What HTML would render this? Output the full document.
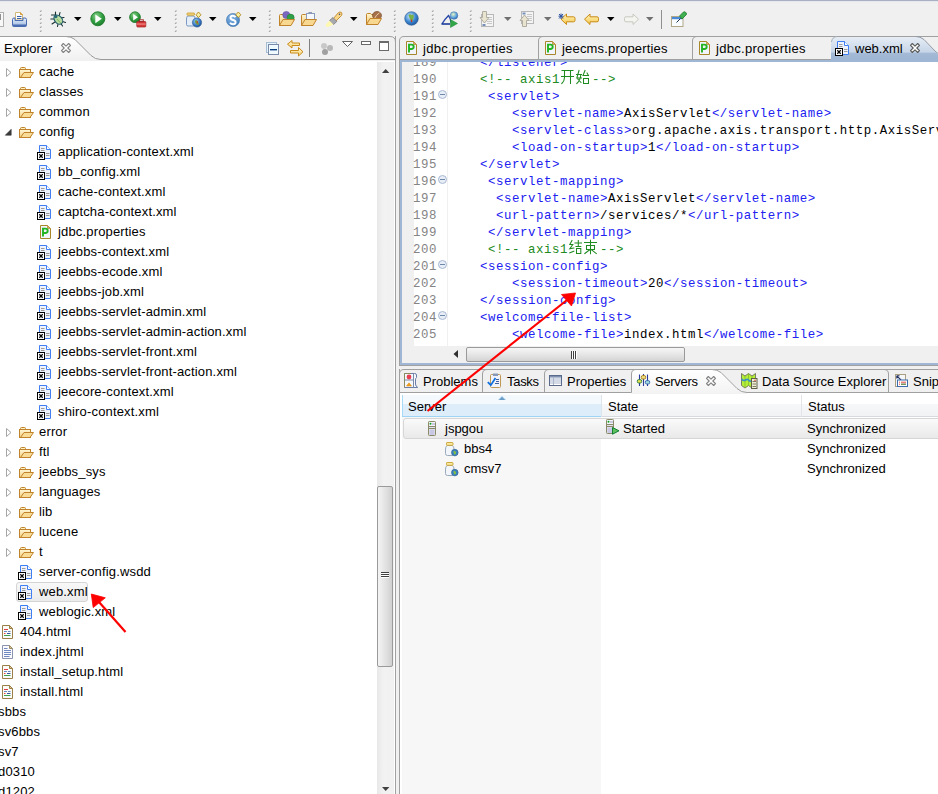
<!DOCTYPE html>
<html><head><meta charset="utf-8">
<style>
*{margin:0;padding:0;box-sizing:border-box}
html,body{width:938px;height:794px;overflow:hidden;background:#f0f0f0;font-family:"Liberation Sans",sans-serif;font-size:13px;color:#000}
.a{position:absolute}
svg{position:absolute;overflow:visible}
.t{position:absolute;white-space:pre;line-height:16px}
.code{position:absolute;font-family:"Liberation Mono",monospace;font-size:12.4px;letter-spacing:0.56px;line-height:17px;white-space:pre}
.tg{color:#2020f0}
.cm{color:#208a20}
.tx{color:#000}
.ln{color:#848484}
</style></head><body>
<!-- top window edge -->
<div class="a" style="left:0;top:0;width:938px;height:1px;background:#aab0c4"></div>
<div class="a" style="left:0;top:1px;width:938px;height:1px;background:#e6e7ec"></div>

<!-- TOOLBAR -->
<div class="a" style="left:0;top:2px;width:938px;height:34px;background:#f0f0f0"></div>
<svg style="left:0;top:12px" width="4" height="15"><rect x="-6" y="0.5" width="9.5" height="14" fill="#f8f8f8" stroke="#b0b0b0"/><rect x="0" y="2" width="1" height="6" fill="#909090"/></svg>
<svg style="left:12px;top:11px" width="16" height="17">
<defs><linearGradient id="prn" x1="0" y1="0" x2="0" y2="1"><stop offset="0" stop-color="#e8f0fa"/><stop offset="1" stop-color="#9ab4dc"/></linearGradient></defs>
<path d="M3.5 1.5H8.5L10.5 3.5V9H3.5Z" fill="#fcfcfc" stroke="#d0b878"/>
<path d="M8.5 1.5V3.5H10.5" fill="#e8a840" stroke="#d09020" stroke-width="0.8"/>
<rect x="5" y="5" width="4.5" height="1" fill="#3a60a8"/><rect x="5" y="7" width="4.5" height="1" fill="#3a60a8"/>
<path d="M0.5 8.5Q0.5 7 2 7H3V9.5H11V7H13Q14.5 7 14.5 8.5V14.5Q14.5 15.5 13.5 15.5H1.5Q0.5 15.5 0.5 14.5Z" fill="url(#prn)" stroke="#4a6cb0"/>
<rect x="1" y="13.5" width="13" height="1.6" fill="#4a6cb0"/>
</svg>
<svg style="left:39px;top:9px" width="4" height="23"><path d="M1 3L2.5 1.5" stroke="#a8a8a8" stroke-width="1.1"/><rect x="1.5" y="3" width="1" height="1" fill="#fff"/><path d="M1 7L2.5 5.5" stroke="#a8a8a8" stroke-width="1.1"/><rect x="1.5" y="7" width="1" height="1" fill="#fff"/><path d="M1 11L2.5 9.5" stroke="#a8a8a8" stroke-width="1.1"/><rect x="1.5" y="11" width="1" height="1" fill="#fff"/><path d="M1 15L2.5 13.5" stroke="#a8a8a8" stroke-width="1.1"/><rect x="1.5" y="15" width="1" height="1" fill="#fff"/><path d="M1 19L2.5 17.5" stroke="#a8a8a8" stroke-width="1.1"/><rect x="1.5" y="19" width="1" height="1" fill="#fff"/><path d="M1 23L2.5 21.5" stroke="#a8a8a8" stroke-width="1.1"/><rect x="1.5" y="23" width="1" height="1" fill="#fff"/></svg>
<svg style="left:50px;top:11px" width="17" height="17">
<g stroke="#1a3030" stroke-width="1.1" fill="none" stroke-linecap="round">
<path d="M5.5 1V4.5M1.5 4H5M0.8 8H4.2M2 13L5 11M7.5 15.5L8 13"/>
<path d="M10 1.5L9.3 4.5M14 6.5L11.5 6.8M15.5 11.5L12.5 10.5M12.5 15L11 12.5"/>
</g>
<ellipse cx="8.3" cy="8.6" rx="3.6" ry="5.2" transform="rotate(-42 8.3 8.6)" fill="#b8dca0" stroke="#1f5a6a" stroke-width="1.1"/>
<circle cx="5.8" cy="5.6" r="1.7" fill="#2a6a78"/>
<path d="M6.8 8L10.5 11.8" stroke="#78b060" stroke-width="1"/>
</svg>
<svg style="left:74px;top:17px" width="8" height="5"><path d="M0 0H7.5L3.75 4Z" fill="#000"/></svg>
<svg style="left:90px;top:11px" width="16" height="16">
<defs><radialGradient id="gr1" cx="0.4" cy="0.3" r="0.75"><stop offset="0" stop-color="#8ad08a"/><stop offset="0.55" stop-color="#33a043"/><stop offset="1" stop-color="#18782a"/></radialGradient></defs>
<circle cx="7.8" cy="7.8" r="7" fill="url(#gr1)" stroke="#1f7a2a" stroke-width="0.9"/>
<path d="M5.3 3.6L11.8 7.8L5.3 12.2Z" fill="#fff"/>
</svg>
<svg style="left:114px;top:17px" width="8" height="5"><path d="M0 0H7.5L3.75 4Z" fill="#000"/></svg>
<svg style="left:129px;top:11px" width="18" height="17">
<circle cx="6" cy="6.2" r="5.4" fill="url(#gr1)" stroke="#1f7a2a" stroke-width="0.8"/>
<path d="M4.2 3L9 6.2L4.2 9.4Z" fill="#fff"/>
<rect x="7.8" y="10.5" width="9" height="5.5" rx="0.8" fill="#d83a3a" stroke="#a02020" stroke-width="0.7"/>
<rect x="10.3" y="8.8" width="4" height="2" fill="none" stroke="#a02020" stroke-width="0.9"/>
<rect x="8" y="12.6" width="8.6" height="0.9" fill="#f8a0a0"/>
</svg>
<svg style="left:154px;top:17px" width="8" height="5"><path d="M0 0H7.5L3.75 4Z" fill="#000"/></svg>
<svg style="left:174px;top:9px" width="4" height="23"><path d="M1 3L2.5 1.5" stroke="#a8a8a8" stroke-width="1.1"/><rect x="1.5" y="3" width="1" height="1" fill="#fff"/><path d="M1 7L2.5 5.5" stroke="#a8a8a8" stroke-width="1.1"/><rect x="1.5" y="7" width="1" height="1" fill="#fff"/><path d="M1 11L2.5 9.5" stroke="#a8a8a8" stroke-width="1.1"/><rect x="1.5" y="11" width="1" height="1" fill="#fff"/><path d="M1 15L2.5 13.5" stroke="#a8a8a8" stroke-width="1.1"/><rect x="1.5" y="15" width="1" height="1" fill="#fff"/><path d="M1 19L2.5 17.5" stroke="#a8a8a8" stroke-width="1.1"/><rect x="1.5" y="19" width="1" height="1" fill="#fff"/><path d="M1 23L2.5 21.5" stroke="#a8a8a8" stroke-width="1.1"/><rect x="1.5" y="23" width="1" height="1" fill="#fff"/></svg>
<svg style="left:186px;top:11px" width="17" height="17">
<path d="M1.5 5Q0.5 6 0.5 8V13.5Q0.5 15 2 15H7.5Q9 15 9 13.5V8Q9 6 8 5Z" fill="#e4eef8" stroke="#7a98c0"/>
<rect x="1" y="2" width="7.5" height="2.2" rx="0.6" fill="#f4d880" stroke="#c89a28" stroke-width="0.8"/>
<defs><radialGradient id="glb" cx="0.4" cy="0.35" r="0.7"><stop offset="0" stop-color="#a0d0f8"/><stop offset="0.6" stop-color="#3a7ac8"/><stop offset="1" stop-color="#1a4a90"/></radialGradient></defs>
<circle cx="11" cy="11.5" r="4.6" fill="url(#glb)" stroke="#2a5a90" stroke-width="0.6"/>
<path d="M9 9.5Q10.5 8.5 11.5 10T13 13.5L11 14Q10 12 9 11.5Z" fill="#70a840"/>
<path d="M11.2 10V12.5" stroke="#d03020" stroke-width="1"/>
<path d="M12.5 1L15 3.8L12.5 6.6L10 3.8Z" fill="#f8f0a0" stroke="#b08820" stroke-width="0.9"/>
</svg>
<svg style="left:209px;top:17px" width="8" height="5"><path d="M0 0H7.5L3.75 4Z" fill="#000"/></svg>
<svg style="left:226px;top:11px" width="17" height="17">
<defs><radialGradient id="gb1" cx="0.4" cy="0.35" r="0.75"><stop offset="0" stop-color="#88b8e8"/><stop offset="1" stop-color="#3a78b8"/></radialGradient></defs>
<circle cx="7" cy="9" r="6.6" fill="url(#gb1)" stroke="#4a7ab0" stroke-width="0.6"/>
<path d="M9.6 6.2Q8.5 4.8 6.8 4.8Q4.5 4.8 4.5 6.8Q4.5 8.4 7 9Q9.6 9.6 9.6 11.2Q9.6 13.3 7 13.3Q5 13.3 4 11.8" fill="none" stroke="#fff" stroke-width="1.9"/>
<path d="M12.3 1L14.8 3.8L12.3 6.6L9.8 3.8Z" fill="#f8f0a0" stroke="#b08820" stroke-width="0.9"/>
</svg>
<svg style="left:249px;top:17px" width="8" height="5"><path d="M0 0H7.5L3.75 4Z" fill="#000"/></svg>
<svg style="left:268px;top:9px" width="4" height="23"><path d="M1 3L2.5 1.5" stroke="#a8a8a8" stroke-width="1.1"/><rect x="1.5" y="3" width="1" height="1" fill="#fff"/><path d="M1 7L2.5 5.5" stroke="#a8a8a8" stroke-width="1.1"/><rect x="1.5" y="7" width="1" height="1" fill="#fff"/><path d="M1 11L2.5 9.5" stroke="#a8a8a8" stroke-width="1.1"/><rect x="1.5" y="11" width="1" height="1" fill="#fff"/><path d="M1 15L2.5 13.5" stroke="#a8a8a8" stroke-width="1.1"/><rect x="1.5" y="15" width="1" height="1" fill="#fff"/><path d="M1 19L2.5 17.5" stroke="#a8a8a8" stroke-width="1.1"/><rect x="1.5" y="19" width="1" height="1" fill="#fff"/><path d="M1 23L2.5 21.5" stroke="#a8a8a8" stroke-width="1.1"/><rect x="1.5" y="23" width="1" height="1" fill="#fff"/></svg>
<svg style="left:279px;top:11px" width="17" height="16">
<defs><linearGradient id="tf279" x1="0" y1="0" x2="0" y2="1"><stop offset="0" stop-color="#fff6d0"/><stop offset="1" stop-color="#f0c870"/></linearGradient></defs>
<path d="M0.5 14.5V4.5Q0.5 3.5 1.5 3.5H4.5L5.5 4.5H12.5V8" fill="url(#tf279)" stroke="#c0822a"/>
<circle cx="7.3" cy="4" r="3.6" fill="#7a68c0" stroke="#5a4aa0" stroke-width="0.5"/><circle cx="11.6" cy="6.7" r="3.6" fill="#30a048" stroke="#207a30" stroke-width="0.5"/>
<path d="M0.5 14.5L4 8.5H15.5L12 14.5Z" fill="#f8d890" stroke="#c0822a" stroke-linejoin="round"/>
<path d="M0.5 14.5V8" stroke="#c0822a"/>

</svg>
<svg style="left:301px;top:11px" width="17" height="16">
<defs><linearGradient id="tf301" x1="0" y1="0" x2="0" y2="1"><stop offset="0" stop-color="#fff6d0"/><stop offset="1" stop-color="#f0c870"/></linearGradient></defs>
<path d="M0.5 14.5V4.5Q0.5 3.5 1.5 3.5H4.5L5.5 4.5H12.5V8" fill="url(#tf301)" stroke="#c0822a"/>
<rect x="5.5" y="2.5" width="8" height="6" fill="#f4f8fc" stroke="#8a9ab8"/><rect x="7.5" y="1" width="3.5" height="2" fill="#8a9ab8"/>
<path d="M0.5 14.5L4 8.5H15.5L12 14.5Z" fill="#f8d890" stroke="#c0822a" stroke-linejoin="round"/>
<path d="M0.5 14.5V8" stroke="#c0822a"/>

</svg>
<svg style="left:325px;top:11px" width="18" height="17">
<path d="M8 8L13.5 1.5Q15 0.5 16.5 1.5Q17.5 3 16.5 4.5L10.5 10.5Z" fill="#f8d888" stroke="#c08828" stroke-width="0.9"/>
<path d="M4.5 9.5L8 6.5L11.8 10.5L8.5 13.5Z" fill="#a8a8b0" stroke="#787880" stroke-width="0.8"/>
<path d="M0.5 14Q1 16.5 3 16L8.5 13.5L4.5 9.5Z" fill="#fff8b0"/>
<circle cx="14.5" cy="3.2" r="0.8" fill="#304070"/>
</svg>
<svg style="left:350px;top:17px" width="8" height="5"><path d="M0 0H7.5L3.75 4Z" fill="#000"/></svg>
<svg style="left:366px;top:10px" width="17" height="16">
<defs><linearGradient id="tf366" x1="0" y1="0" x2="0" y2="1"><stop offset="0" stop-color="#fff6d0"/><stop offset="1" stop-color="#f0c870"/></linearGradient></defs>
<path d="M0.5 14.5V4.5Q0.5 3.5 1.5 3.5H4.5L5.5 4.5H12.5V8" fill="url(#tf366)" stroke="#c0822a"/>
<ellipse cx="11" cy="5.5" rx="4.5" ry="4" fill="#a87048" stroke="#6a4020" stroke-width="0.6"/><path d="M8.5 8.5Q10 5 13.5 2.8" stroke="#f0d8b0" stroke-width="0.9" fill="none"/>
<path d="M0.5 14.5L4 8.5H15.5L12 14.5Z" fill="#f8d890" stroke="#c0822a" stroke-linejoin="round"/>
<path d="M0.5 14.5V8" stroke="#c0822a"/>

</svg>
<svg style="left:393px;top:9px" width="4" height="23"><path d="M1 3L2.5 1.5" stroke="#a8a8a8" stroke-width="1.1"/><rect x="1.5" y="3" width="1" height="1" fill="#fff"/><path d="M1 7L2.5 5.5" stroke="#a8a8a8" stroke-width="1.1"/><rect x="1.5" y="7" width="1" height="1" fill="#fff"/><path d="M1 11L2.5 9.5" stroke="#a8a8a8" stroke-width="1.1"/><rect x="1.5" y="11" width="1" height="1" fill="#fff"/><path d="M1 15L2.5 13.5" stroke="#a8a8a8" stroke-width="1.1"/><rect x="1.5" y="15" width="1" height="1" fill="#fff"/><path d="M1 19L2.5 17.5" stroke="#a8a8a8" stroke-width="1.1"/><rect x="1.5" y="19" width="1" height="1" fill="#fff"/><path d="M1 23L2.5 21.5" stroke="#a8a8a8" stroke-width="1.1"/><rect x="1.5" y="23" width="1" height="1" fill="#fff"/></svg>
<svg style="left:404px;top:11px" width="16" height="16">
<defs><radialGradient id="gg1" cx="0.4" cy="0.35" r="0.75"><stop offset="0" stop-color="#d0ecff"/><stop offset="0.55" stop-color="#3a84d0"/><stop offset="1" stop-color="#1a4a90"/></radialGradient></defs>
<circle cx="7.5" cy="7.5" r="6.8" fill="url(#gg1)" stroke="#2a5a90" stroke-width="0.6"/>
<path d="M4.5 4Q6 2.5 7.5 4L9.5 3.5Q10.5 6 9 8.5L8 11Q6.5 9 5.5 7Z" fill="#78b048"/>
<path d="M7.2 8.5L7.8 11" stroke="#d03020" stroke-width="1.2"/>
</svg>
<svg style="left:431px;top:9px" width="4" height="23"><path d="M1 3L2.5 1.5" stroke="#a8a8a8" stroke-width="1.1"/><rect x="1.5" y="3" width="1" height="1" fill="#fff"/><path d="M1 7L2.5 5.5" stroke="#a8a8a8" stroke-width="1.1"/><rect x="1.5" y="7" width="1" height="1" fill="#fff"/><path d="M1 11L2.5 9.5" stroke="#a8a8a8" stroke-width="1.1"/><rect x="1.5" y="11" width="1" height="1" fill="#fff"/><path d="M1 15L2.5 13.5" stroke="#a8a8a8" stroke-width="1.1"/><rect x="1.5" y="15" width="1" height="1" fill="#fff"/><path d="M1 19L2.5 17.5" stroke="#a8a8a8" stroke-width="1.1"/><rect x="1.5" y="19" width="1" height="1" fill="#fff"/><path d="M1 23L2.5 21.5" stroke="#a8a8a8" stroke-width="1.1"/><rect x="1.5" y="23" width="1" height="1" fill="#fff"/></svg>
<svg style="left:441px;top:11px" width="18" height="17">
<defs><radialGradient id="gp1" cx="0.4" cy="0.35" r="0.75"><stop offset="0" stop-color="#e8f4c0"/><stop offset="0.6" stop-color="#58a0e0"/><stop offset="1" stop-color="#2a60a8"/></radialGradient></defs>
<circle cx="13" cy="4.5" r="3.8" fill="url(#gp1)" stroke="#3a6aa0" stroke-width="0.5"/>
<path d="M1 12.8Q4 8 7.5 4.5Q9.5 7 10 11.5" fill="none" stroke="#2a48a8" stroke-width="1.3"/>
<path d="M0.5 13H9" stroke="#1a3a98" stroke-width="1.6"/>
<path d="M9.5 8.5L16.5 12.5L9.5 16.5Z" fill="#30a848" stroke="#1a8030" stroke-width="0.5"/>
</svg>
<svg style="left:469px;top:9px" width="4" height="23"><path d="M1 3L2.5 1.5" stroke="#a8a8a8" stroke-width="1.1"/><rect x="1.5" y="3" width="1" height="1" fill="#fff"/><path d="M1 7L2.5 5.5" stroke="#a8a8a8" stroke-width="1.1"/><rect x="1.5" y="7" width="1" height="1" fill="#fff"/><path d="M1 11L2.5 9.5" stroke="#a8a8a8" stroke-width="1.1"/><rect x="1.5" y="11" width="1" height="1" fill="#fff"/><path d="M1 15L2.5 13.5" stroke="#a8a8a8" stroke-width="1.1"/><rect x="1.5" y="15" width="1" height="1" fill="#fff"/><path d="M1 19L2.5 17.5" stroke="#a8a8a8" stroke-width="1.1"/><rect x="1.5" y="19" width="1" height="1" fill="#fff"/><path d="M1 23L2.5 21.5" stroke="#a8a8a8" stroke-width="1.1"/><rect x="1.5" y="23" width="1" height="1" fill="#fff"/></svg>
<svg style="left:480px;top:11px" width="16" height="17">
<rect x="1.5" y="3.5" width="12" height="12" fill="#f4f4f4" stroke="#b8b8b8"/>
<path d="M7 6.5H12M7 8.5H12M7 10.5H12M7 12.5H12" stroke="#c8c8c8"/>
<rect x="2.5" y="13" width="3" height="2" fill="#7890b8"/>
<path d="M2.5 0.5H6.5V6.5H9L4.5 12L0 6.5H2.5Z" fill="#e8e4d0" stroke="#b0aca0"/>
</svg>
<svg style="left:504px;top:17px" width="8" height="5"><path d="M0 0H7.5L3.75 4Z" fill="#707070"/></svg>
<svg style="left:520px;top:11px" width="16" height="17">
<rect x="1.5" y="0.5" width="12" height="12" fill="#f4f4f4" stroke="#b8b8b8"/>
<path d="M7 3.5H12M7 5.5H12M7 7.5H12M7 9.5H12" stroke="#c8c8c8"/>
<rect x="2.5" y="1.5" width="3" height="2" fill="#7890b8"/>
<path d="M2.5 15.5H6.5V9.5H9L4.5 4L0 9.5H2.5Z" fill="#e8e4d0" stroke="#b0aca0"/>
</svg>
<svg style="left:544px;top:17px" width="8" height="5"><path d="M0 0H7.5L3.75 4Z" fill="#707070"/></svg>
<svg style="left:558px;top:13px" width="18" height="13"><defs><linearGradient id="yarr" x1="0" y1="0" x2="0" y2="1"><stop offset="0" stop-color="#fff4c0"/><stop offset="1" stop-color="#f8c848"/></linearGradient></defs><path d="M0.5 6.2L6 1V3.8H13Q14.5 3.8 14.5 5.3V7.3Q14.5 8.8 13 8.8H6V11.5Z" transform="translate(2.5 0)" fill="url(#yarr)" stroke="#c88a18" stroke-linejoin="round"/><path d="M3 0.5V6M0.5 3.2H5.5M1 1L5 5.5M5 1L1 5.5" stroke="#2a50a0" stroke-width="1"/></svg>
<svg style="left:584px;top:13px" width="16" height="13"><path d="M0.5 6.2L6 1V3.8H13Q14.5 3.8 14.5 5.3V7.3Q14.5 8.8 13 8.8H6V11.5Z" transform="translate(0 0)" fill="url(#yarr)" stroke="#c88a18" stroke-linejoin="round"/></svg>
<svg style="left:607px;top:17px" width="8" height="5"><path d="M0 0H7.5L3.75 4Z" fill="#000"/></svg>
<svg style="left:624px;top:13px" width="16" height="13"><path d="M0.5 6.2L6 1V3.8H13Q14.5 3.8 14.5 5.3V7.3Q14.5 8.8 13 8.8H6V11.5Z" transform="translate(0 0) translate(15 0) scale(-1 1)" fill="#f4f4f0" stroke="#c8c8c0" stroke-linejoin="round"/></svg>
<svg style="left:646px;top:17px" width="8" height="5"><path d="M0 0H7.5L3.75 4Z" fill="#707070"/></svg>
<div class="a" style="left:661px;top:10px;width:1px;height:19px;background:#909090"></div>
<svg style="left:671px;top:11px" width="16" height="17">
<rect x="0.5" y="5.5" width="11.5" height="10" fill="#f8fbff" stroke="#b0a888"/>
<rect x="1" y="6" width="10.5" height="2.2" fill="#4a88d8"/>
<path d="M5.5 11.5L9.5 7.5" stroke="#203050" stroke-width="1"/>
<path d="M8.5 5L12.5 1Q13.5 0.3 14.5 1.2L15.2 2Q16 3 15 4L11 8Z" fill="#40b050" stroke="#1a7a2a" stroke-width="0.8"/>
</svg>
<!-- LEFT PANEL -->
<div class="a" style="left:0;top:61px;width:395px;height:733px;background:#fff"></div>
<div class="a" style="left:0;top:36px;width:396px;height:25px;background:#f0f0f0"></div>
<svg style="left:0;top:36px" width="397" height="26">
<defs><linearGradient id="tabw" x1="0" y1="0" x2="0" y2="1"><stop offset="0" stop-color="#ffffff"/><stop offset="1" stop-color="#f0f0f0"/></linearGradient></defs>
<path d="M-1 0.5H66Q71 0.5 75 3.5L91 19.5Q95 23.5 101 23.5V25H-1Z" fill="url(#tabw)"/>
<path d="M66 0.5Q71 0.5 75 3.5L91 19.5Q95 23.5 101 23.5H395.5" fill="none" stroke="#9a9a9a"/>
<path d="M-1 0.5H390Q395.5 0.5 395.5 6V26" fill="none" stroke="#a0a0a0"/>
</svg>
<div class="t" style="left:4px;top:41px;">Explorer</div>
<svg style="left:61px;top:43px" width="11" height="11">
<path d="M0.5 2.3L2.3 0.5L5 3.2L7.7 0.5L9.5 2.3L6.8 5L9.5 7.7L7.7 9.5L5 6.8L2.3 9.5L0.5 7.7L3.2 5Z" fill="#fff" stroke="#808080" stroke-width="1.1" stroke-linejoin="round"/>
</svg>
<svg style="left:266px;top:42px" width="14" height="14">
<rect x="0.5" y="0.5" width="10" height="10" fill="#e4f4fc" stroke="#a8bcd4"/>
<rect x="2.5" y="2.5" width="10" height="10" fill="#eefaff" stroke="#7a8aa8"/>
<rect x="4" y="7" width="7" height="1.4" fill="#0a3a80"/>
</svg>
<svg style="left:287px;top:40px" width="17" height="17">
<defs><linearGradient id="lnk" x1="0" y1="0" x2="0" y2="1"><stop offset="0" stop-color="#fff8d0"/><stop offset="1" stop-color="#f8d070"/></linearGradient></defs>
<path d="M0.5 4.2L5 0.5V3H12.5V5.5H5V8Z" fill="url(#lnk)" stroke="#c88a18" stroke-linejoin="round"/>
<path d="M16 11.8L11.5 7.5V10.5H3.5V13H11.5V16Z" fill="url(#lnk)" stroke="#c88a18" stroke-linejoin="round"/>
</svg>
<div class="a" style="left:309px;top:39px;width:1px;height:18px;background:#808080"></div>
<svg style="left:320px;top:42px" width="14" height="14">
<circle cx="4" cy="4" r="3" fill="#c8c8c8"/><circle cx="10" cy="6" r="3" fill="#b8b8b8"/><circle cx="5" cy="10" r="3" fill="#a0a0a0"/>
</svg>
<svg style="left:342px;top:41px" width="11" height="6"><path d="M0.5 0.5H10.5L5.5 5.5Z" fill="#fff" stroke="#555" stroke-width="0.9"/></svg>
<div class="a" style="left:361px;top:41px;width:10px;height:4px;border:1px solid #6a6a6a;background:#fff"></div>
<div class="a" style="left:379px;top:41px;width:10px;height:10px;border:1px solid #6a6a6a;border-top-width:2px;background:#fff"></div>
<div class="a" style="left:377px;top:62px;width:17px;height:732px;background:linear-gradient(to right,#e8e8e8,#f2f2f2 40%,#f0f0f0)"></div>
<svg style="left:382px;top:69px" width="8" height="5"><path d="M0 4L3.7 0L7.4 4Z" fill="#404040"/></svg>
<svg style="left:382px;top:787px" width="8" height="5"><path d="M0 0L3.7 4L7.4 0Z" fill="#404040"/></svg>
<div class="a" style="left:377px;top:486px;width:16px;height:181px;border:1px solid #9a9a9a;border-radius:2px;background:linear-gradient(to right,#f4f4f4,#e0e0e0 60%,#d0d0d0)"></div>
<svg style="left:381px;top:572px" width="8" height="7"><path d="M0 0.5H8M0 2.5H8M0 4.5H8" stroke="#404040"/><path d="M0 1.5H8M0 3.5H8M0 5.5H8" stroke="#fff"/></svg>
<div class="a" style="left:395px;top:36px;width:1px;height:758px;background:#a0a0a0"></div>
<svg style="left:6px;top:68px" width="6" height="9"><path d="M0.5 0.5L5 4.5L0.5 8.5Z" fill="#fff" stroke="#a6a6a6"/></svg>
<svg style="left:19px;top:67px" width="16" height="12">
<defs><linearGradient id="fg67" x1="0" y1="0" x2="0" y2="1"><stop offset="0" stop-color="#fff8d8"/><stop offset="1" stop-color="#f4cf80"/></linearGradient></defs>
<path d="M1.5 2.5V1.5Q1.5 0.5 2.5 0.5H5.5Q6.5 0.5 6.5 1.5V2.5H11.5V5.5" fill="#fdf0c0" stroke="#c0822a"/>
<rect x="0.5" y="2.5" width="11" height="8" fill="url(#fg67)" stroke="#c0822a"/>
<path d="M1.5 10.5L5 5.5H14.5L11 10.5Z" fill="#f8dc98" stroke="#c0822a"/>
</svg>
<div class="t" style="left:39px;top:64px;letter-spacing:0.16px">cache</div>
<svg style="left:6px;top:88px" width="6" height="9"><path d="M0.5 0.5L5 4.5L0.5 8.5Z" fill="#fff" stroke="#a6a6a6"/></svg>
<svg style="left:19px;top:87px" width="16" height="12">
<defs><linearGradient id="fg87" x1="0" y1="0" x2="0" y2="1"><stop offset="0" stop-color="#fff8d8"/><stop offset="1" stop-color="#f4cf80"/></linearGradient></defs>
<path d="M1.5 2.5V1.5Q1.5 0.5 2.5 0.5H5.5Q6.5 0.5 6.5 1.5V2.5H11.5V5.5" fill="#fdf0c0" stroke="#c0822a"/>
<rect x="0.5" y="2.5" width="11" height="8" fill="url(#fg87)" stroke="#c0822a"/>
<path d="M1.5 10.5L5 5.5H14.5L11 10.5Z" fill="#f8dc98" stroke="#c0822a"/>
</svg>
<div class="t" style="left:39px;top:84px;letter-spacing:0.16px">classes</div>
<svg style="left:6px;top:108px" width="6" height="9"><path d="M0.5 0.5L5 4.5L0.5 8.5Z" fill="#fff" stroke="#a6a6a6"/></svg>
<svg style="left:19px;top:107px" width="16" height="12">
<defs><linearGradient id="fg107" x1="0" y1="0" x2="0" y2="1"><stop offset="0" stop-color="#fff8d8"/><stop offset="1" stop-color="#f4cf80"/></linearGradient></defs>
<path d="M1.5 2.5V1.5Q1.5 0.5 2.5 0.5H5.5Q6.5 0.5 6.5 1.5V2.5H11.5V5.5" fill="#fdf0c0" stroke="#c0822a"/>
<rect x="0.5" y="2.5" width="11" height="8" fill="url(#fg107)" stroke="#c0822a"/>
<path d="M1.5 10.5L5 5.5H14.5L11 10.5Z" fill="#f8dc98" stroke="#c0822a"/>
</svg>
<div class="t" style="left:39px;top:104px;letter-spacing:0.16px">common</div>
<svg style="left:5px;top:129px" width="7" height="7"><path d="M6.2 0.3V6.2H0.3Z" fill="#383838" stroke="#383838" stroke-width="0.6" stroke-linejoin="round"/></svg>
<svg style="left:19px;top:127px" width="16" height="12">
<defs><linearGradient id="fg127" x1="0" y1="0" x2="0" y2="1"><stop offset="0" stop-color="#fff8d8"/><stop offset="1" stop-color="#f4cf80"/></linearGradient></defs>
<path d="M1.5 2.5V1.5Q1.5 0.5 2.5 0.5H5.5Q6.5 0.5 6.5 1.5V2.5H11.5V5.5" fill="#fdf0c0" stroke="#c0822a"/>
<rect x="0.5" y="2.5" width="11" height="8" fill="url(#fg127)" stroke="#c0822a"/>
<path d="M1.5 10.5L5 5.5H14.5L11 10.5Z" fill="#f8dc98" stroke="#c0822a"/>
</svg>
<div class="t" style="left:39px;top:124px;letter-spacing:0.16px">config</div>
<svg style="left:37px;top:145px" width="15" height="16">
<path d="M2.5 0.5H9.5L13.5 4.5V13.5H2.5Z" fill="#eef2fd" stroke="#3f7ff2"/>
<path d="M9.5 0.5V4.5H13.5" fill="#ffffff" stroke="#3f7ff2"/>
<path d="M4 3.5H7.5M4 5.5H7.5M9 8.5H12.5M9 10.5H12.5" stroke="#9a9a9a"/>
<rect x="0.5" y="7.5" width="7" height="7" fill="#fff" stroke="#000"/>
<path d="M2.3 9.3L5.7 12.7M5.7 9.3L2.3 12.7" stroke="#000" stroke-width="1.25" fill="none"/>
</svg>
<div class="t" style="left:58px;top:144px;letter-spacing:0.16px">application-context.xml</div>
<svg style="left:37px;top:165px" width="15" height="16">
<path d="M2.5 0.5H9.5L13.5 4.5V13.5H2.5Z" fill="#eef2fd" stroke="#3f7ff2"/>
<path d="M9.5 0.5V4.5H13.5" fill="#ffffff" stroke="#3f7ff2"/>
<path d="M4 3.5H7.5M4 5.5H7.5M9 8.5H12.5M9 10.5H12.5" stroke="#9a9a9a"/>
<rect x="0.5" y="7.5" width="7" height="7" fill="#fff" stroke="#000"/>
<path d="M2.3 9.3L5.7 12.7M5.7 9.3L2.3 12.7" stroke="#000" stroke-width="1.25" fill="none"/>
</svg>
<div class="t" style="left:58px;top:164px;letter-spacing:0.16px">bb_config.xml</div>
<svg style="left:37px;top:185px" width="15" height="16">
<path d="M2.5 0.5H9.5L13.5 4.5V13.5H2.5Z" fill="#eef2fd" stroke="#3f7ff2"/>
<path d="M9.5 0.5V4.5H13.5" fill="#ffffff" stroke="#3f7ff2"/>
<path d="M4 3.5H7.5M4 5.5H7.5M9 8.5H12.5M9 10.5H12.5" stroke="#9a9a9a"/>
<rect x="0.5" y="7.5" width="7" height="7" fill="#fff" stroke="#000"/>
<path d="M2.3 9.3L5.7 12.7M5.7 9.3L2.3 12.7" stroke="#000" stroke-width="1.25" fill="none"/>
</svg>
<div class="t" style="left:58px;top:184px;letter-spacing:0.16px">cache-context.xml</div>
<svg style="left:37px;top:205px" width="15" height="16">
<path d="M2.5 0.5H9.5L13.5 4.5V13.5H2.5Z" fill="#eef2fd" stroke="#3f7ff2"/>
<path d="M9.5 0.5V4.5H13.5" fill="#ffffff" stroke="#3f7ff2"/>
<path d="M4 3.5H7.5M4 5.5H7.5M9 8.5H12.5M9 10.5H12.5" stroke="#9a9a9a"/>
<rect x="0.5" y="7.5" width="7" height="7" fill="#fff" stroke="#000"/>
<path d="M2.3 9.3L5.7 12.7M5.7 9.3L2.3 12.7" stroke="#000" stroke-width="1.25" fill="none"/>
</svg>
<div class="t" style="left:58px;top:204px;letter-spacing:0.16px">captcha-context.xml</div>
<svg style="left:40px;top:225px" width="12" height="15">
<path d="M0.5 0.5H7.5L10.5 3.5V13.5H0.5Z" fill="#f2f4fb" stroke="#a8862a"/>
<path d="M7.5 0.5V3.5H10.5Z" fill="#d8b060" stroke="#b89040" stroke-width="0.8"/>
<path d="M3 11.5V3.6H5.3Q7.7 3.6 7.7 5.8Q7.7 8 5.3 8H3" fill="none" stroke="#22b422" stroke-width="1.9"/>
</svg>
<div class="t" style="left:58px;top:224px;letter-spacing:0.16px">jdbc.properties</div>
<svg style="left:37px;top:245px" width="15" height="16">
<path d="M2.5 0.5H9.5L13.5 4.5V13.5H2.5Z" fill="#eef2fd" stroke="#3f7ff2"/>
<path d="M9.5 0.5V4.5H13.5" fill="#ffffff" stroke="#3f7ff2"/>
<path d="M4 3.5H7.5M4 5.5H7.5M9 8.5H12.5M9 10.5H12.5" stroke="#9a9a9a"/>
<rect x="0.5" y="7.5" width="7" height="7" fill="#fff" stroke="#000"/>
<path d="M2.3 9.3L5.7 12.7M5.7 9.3L2.3 12.7" stroke="#000" stroke-width="1.25" fill="none"/>
</svg>
<div class="t" style="left:58px;top:244px;letter-spacing:0.16px">jeebbs-context.xml</div>
<svg style="left:37px;top:265px" width="15" height="16">
<path d="M2.5 0.5H9.5L13.5 4.5V13.5H2.5Z" fill="#eef2fd" stroke="#3f7ff2"/>
<path d="M9.5 0.5V4.5H13.5" fill="#ffffff" stroke="#3f7ff2"/>
<path d="M4 3.5H7.5M4 5.5H7.5M9 8.5H12.5M9 10.5H12.5" stroke="#9a9a9a"/>
<rect x="0.5" y="7.5" width="7" height="7" fill="#fff" stroke="#000"/>
<path d="M2.3 9.3L5.7 12.7M5.7 9.3L2.3 12.7" stroke="#000" stroke-width="1.25" fill="none"/>
</svg>
<div class="t" style="left:58px;top:264px;letter-spacing:0.16px">jeebbs-ecode.xml</div>
<svg style="left:37px;top:285px" width="15" height="16">
<path d="M2.5 0.5H9.5L13.5 4.5V13.5H2.5Z" fill="#eef2fd" stroke="#3f7ff2"/>
<path d="M9.5 0.5V4.5H13.5" fill="#ffffff" stroke="#3f7ff2"/>
<path d="M4 3.5H7.5M4 5.5H7.5M9 8.5H12.5M9 10.5H12.5" stroke="#9a9a9a"/>
<rect x="0.5" y="7.5" width="7" height="7" fill="#fff" stroke="#000"/>
<path d="M2.3 9.3L5.7 12.7M5.7 9.3L2.3 12.7" stroke="#000" stroke-width="1.25" fill="none"/>
</svg>
<div class="t" style="left:58px;top:284px;letter-spacing:0.16px">jeebbs-job.xml</div>
<svg style="left:37px;top:305px" width="15" height="16">
<path d="M2.5 0.5H9.5L13.5 4.5V13.5H2.5Z" fill="#eef2fd" stroke="#3f7ff2"/>
<path d="M9.5 0.5V4.5H13.5" fill="#ffffff" stroke="#3f7ff2"/>
<path d="M4 3.5H7.5M4 5.5H7.5M9 8.5H12.5M9 10.5H12.5" stroke="#9a9a9a"/>
<rect x="0.5" y="7.5" width="7" height="7" fill="#fff" stroke="#000"/>
<path d="M2.3 9.3L5.7 12.7M5.7 9.3L2.3 12.7" stroke="#000" stroke-width="1.25" fill="none"/>
</svg>
<div class="t" style="left:58px;top:304px;letter-spacing:0.16px">jeebbs-servlet-admin.xml</div>
<svg style="left:37px;top:325px" width="15" height="16">
<path d="M2.5 0.5H9.5L13.5 4.5V13.5H2.5Z" fill="#eef2fd" stroke="#3f7ff2"/>
<path d="M9.5 0.5V4.5H13.5" fill="#ffffff" stroke="#3f7ff2"/>
<path d="M4 3.5H7.5M4 5.5H7.5M9 8.5H12.5M9 10.5H12.5" stroke="#9a9a9a"/>
<rect x="0.5" y="7.5" width="7" height="7" fill="#fff" stroke="#000"/>
<path d="M2.3 9.3L5.7 12.7M5.7 9.3L2.3 12.7" stroke="#000" stroke-width="1.25" fill="none"/>
</svg>
<div class="t" style="left:58px;top:324px;letter-spacing:0.16px">jeebbs-servlet-admin-action.xml</div>
<svg style="left:37px;top:345px" width="15" height="16">
<path d="M2.5 0.5H9.5L13.5 4.5V13.5H2.5Z" fill="#eef2fd" stroke="#3f7ff2"/>
<path d="M9.5 0.5V4.5H13.5" fill="#ffffff" stroke="#3f7ff2"/>
<path d="M4 3.5H7.5M4 5.5H7.5M9 8.5H12.5M9 10.5H12.5" stroke="#9a9a9a"/>
<rect x="0.5" y="7.5" width="7" height="7" fill="#fff" stroke="#000"/>
<path d="M2.3 9.3L5.7 12.7M5.7 9.3L2.3 12.7" stroke="#000" stroke-width="1.25" fill="none"/>
</svg>
<div class="t" style="left:58px;top:344px;letter-spacing:0.16px">jeebbs-servlet-front.xml</div>
<svg style="left:37px;top:365px" width="15" height="16">
<path d="M2.5 0.5H9.5L13.5 4.5V13.5H2.5Z" fill="#eef2fd" stroke="#3f7ff2"/>
<path d="M9.5 0.5V4.5H13.5" fill="#ffffff" stroke="#3f7ff2"/>
<path d="M4 3.5H7.5M4 5.5H7.5M9 8.5H12.5M9 10.5H12.5" stroke="#9a9a9a"/>
<rect x="0.5" y="7.5" width="7" height="7" fill="#fff" stroke="#000"/>
<path d="M2.3 9.3L5.7 12.7M5.7 9.3L2.3 12.7" stroke="#000" stroke-width="1.25" fill="none"/>
</svg>
<div class="t" style="left:58px;top:364px;letter-spacing:0.16px">jeebbs-servlet-front-action.xml</div>
<svg style="left:37px;top:385px" width="15" height="16">
<path d="M2.5 0.5H9.5L13.5 4.5V13.5H2.5Z" fill="#eef2fd" stroke="#3f7ff2"/>
<path d="M9.5 0.5V4.5H13.5" fill="#ffffff" stroke="#3f7ff2"/>
<path d="M4 3.5H7.5M4 5.5H7.5M9 8.5H12.5M9 10.5H12.5" stroke="#9a9a9a"/>
<rect x="0.5" y="7.5" width="7" height="7" fill="#fff" stroke="#000"/>
<path d="M2.3 9.3L5.7 12.7M5.7 9.3L2.3 12.7" stroke="#000" stroke-width="1.25" fill="none"/>
</svg>
<div class="t" style="left:58px;top:384px;letter-spacing:0.16px">jeecore-context.xml</div>
<svg style="left:37px;top:405px" width="15" height="16">
<path d="M2.5 0.5H9.5L13.5 4.5V13.5H2.5Z" fill="#eef2fd" stroke="#3f7ff2"/>
<path d="M9.5 0.5V4.5H13.5" fill="#ffffff" stroke="#3f7ff2"/>
<path d="M4 3.5H7.5M4 5.5H7.5M9 8.5H12.5M9 10.5H12.5" stroke="#9a9a9a"/>
<rect x="0.5" y="7.5" width="7" height="7" fill="#fff" stroke="#000"/>
<path d="M2.3 9.3L5.7 12.7M5.7 9.3L2.3 12.7" stroke="#000" stroke-width="1.25" fill="none"/>
</svg>
<div class="t" style="left:58px;top:404px;letter-spacing:0.16px">shiro-context.xml</div>
<svg style="left:6px;top:428px" width="6" height="9"><path d="M0.5 0.5L5 4.5L0.5 8.5Z" fill="#fff" stroke="#a6a6a6"/></svg>
<svg style="left:19px;top:427px" width="16" height="12">
<defs><linearGradient id="fg427" x1="0" y1="0" x2="0" y2="1"><stop offset="0" stop-color="#fff8d8"/><stop offset="1" stop-color="#f4cf80"/></linearGradient></defs>
<path d="M1.5 2.5V1.5Q1.5 0.5 2.5 0.5H5.5Q6.5 0.5 6.5 1.5V2.5H11.5V5.5" fill="#fdf0c0" stroke="#c0822a"/>
<rect x="0.5" y="2.5" width="11" height="8" fill="url(#fg427)" stroke="#c0822a"/>
<path d="M1.5 10.5L5 5.5H14.5L11 10.5Z" fill="#f8dc98" stroke="#c0822a"/>
</svg>
<div class="t" style="left:39px;top:424px;letter-spacing:0.16px">error</div>
<svg style="left:6px;top:448px" width="6" height="9"><path d="M0.5 0.5L5 4.5L0.5 8.5Z" fill="#fff" stroke="#a6a6a6"/></svg>
<svg style="left:19px;top:447px" width="16" height="12">
<defs><linearGradient id="fg447" x1="0" y1="0" x2="0" y2="1"><stop offset="0" stop-color="#fff8d8"/><stop offset="1" stop-color="#f4cf80"/></linearGradient></defs>
<path d="M1.5 2.5V1.5Q1.5 0.5 2.5 0.5H5.5Q6.5 0.5 6.5 1.5V2.5H11.5V5.5" fill="#fdf0c0" stroke="#c0822a"/>
<rect x="0.5" y="2.5" width="11" height="8" fill="url(#fg447)" stroke="#c0822a"/>
<path d="M1.5 10.5L5 5.5H14.5L11 10.5Z" fill="#f8dc98" stroke="#c0822a"/>
</svg>
<div class="t" style="left:39px;top:444px;letter-spacing:0.16px">ftl</div>
<svg style="left:6px;top:468px" width="6" height="9"><path d="M0.5 0.5L5 4.5L0.5 8.5Z" fill="#fff" stroke="#a6a6a6"/></svg>
<svg style="left:19px;top:467px" width="16" height="12">
<defs><linearGradient id="fg467" x1="0" y1="0" x2="0" y2="1"><stop offset="0" stop-color="#fff8d8"/><stop offset="1" stop-color="#f4cf80"/></linearGradient></defs>
<path d="M1.5 2.5V1.5Q1.5 0.5 2.5 0.5H5.5Q6.5 0.5 6.5 1.5V2.5H11.5V5.5" fill="#fdf0c0" stroke="#c0822a"/>
<rect x="0.5" y="2.5" width="11" height="8" fill="url(#fg467)" stroke="#c0822a"/>
<path d="M1.5 10.5L5 5.5H14.5L11 10.5Z" fill="#f8dc98" stroke="#c0822a"/>
</svg>
<div class="t" style="left:39px;top:464px;letter-spacing:0.16px">jeebbs_sys</div>
<svg style="left:6px;top:488px" width="6" height="9"><path d="M0.5 0.5L5 4.5L0.5 8.5Z" fill="#fff" stroke="#a6a6a6"/></svg>
<svg style="left:19px;top:487px" width="16" height="12">
<defs><linearGradient id="fg487" x1="0" y1="0" x2="0" y2="1"><stop offset="0" stop-color="#fff8d8"/><stop offset="1" stop-color="#f4cf80"/></linearGradient></defs>
<path d="M1.5 2.5V1.5Q1.5 0.5 2.5 0.5H5.5Q6.5 0.5 6.5 1.5V2.5H11.5V5.5" fill="#fdf0c0" stroke="#c0822a"/>
<rect x="0.5" y="2.5" width="11" height="8" fill="url(#fg487)" stroke="#c0822a"/>
<path d="M1.5 10.5L5 5.5H14.5L11 10.5Z" fill="#f8dc98" stroke="#c0822a"/>
</svg>
<div class="t" style="left:39px;top:484px;letter-spacing:0.16px">languages</div>
<svg style="left:6px;top:508px" width="6" height="9"><path d="M0.5 0.5L5 4.5L0.5 8.5Z" fill="#fff" stroke="#a6a6a6"/></svg>
<svg style="left:19px;top:507px" width="16" height="12">
<defs><linearGradient id="fg507" x1="0" y1="0" x2="0" y2="1"><stop offset="0" stop-color="#fff8d8"/><stop offset="1" stop-color="#f4cf80"/></linearGradient></defs>
<path d="M1.5 2.5V1.5Q1.5 0.5 2.5 0.5H5.5Q6.5 0.5 6.5 1.5V2.5H11.5V5.5" fill="#fdf0c0" stroke="#c0822a"/>
<rect x="0.5" y="2.5" width="11" height="8" fill="url(#fg507)" stroke="#c0822a"/>
<path d="M1.5 10.5L5 5.5H14.5L11 10.5Z" fill="#f8dc98" stroke="#c0822a"/>
</svg>
<div class="t" style="left:39px;top:504px;letter-spacing:0.16px">lib</div>
<svg style="left:6px;top:528px" width="6" height="9"><path d="M0.5 0.5L5 4.5L0.5 8.5Z" fill="#fff" stroke="#a6a6a6"/></svg>
<svg style="left:19px;top:527px" width="16" height="12">
<defs><linearGradient id="fg527" x1="0" y1="0" x2="0" y2="1"><stop offset="0" stop-color="#fff8d8"/><stop offset="1" stop-color="#f4cf80"/></linearGradient></defs>
<path d="M1.5 2.5V1.5Q1.5 0.5 2.5 0.5H5.5Q6.5 0.5 6.5 1.5V2.5H11.5V5.5" fill="#fdf0c0" stroke="#c0822a"/>
<rect x="0.5" y="2.5" width="11" height="8" fill="url(#fg527)" stroke="#c0822a"/>
<path d="M1.5 10.5L5 5.5H14.5L11 10.5Z" fill="#f8dc98" stroke="#c0822a"/>
</svg>
<div class="t" style="left:39px;top:524px;letter-spacing:0.16px">lucene</div>
<svg style="left:6px;top:548px" width="6" height="9"><path d="M0.5 0.5L5 4.5L0.5 8.5Z" fill="#fff" stroke="#a6a6a6"/></svg>
<svg style="left:19px;top:547px" width="16" height="12">
<defs><linearGradient id="fg547" x1="0" y1="0" x2="0" y2="1"><stop offset="0" stop-color="#fff8d8"/><stop offset="1" stop-color="#f4cf80"/></linearGradient></defs>
<path d="M1.5 2.5V1.5Q1.5 0.5 2.5 0.5H5.5Q6.5 0.5 6.5 1.5V2.5H11.5V5.5" fill="#fdf0c0" stroke="#c0822a"/>
<rect x="0.5" y="2.5" width="11" height="8" fill="url(#fg547)" stroke="#c0822a"/>
<path d="M1.5 10.5L5 5.5H14.5L11 10.5Z" fill="#f8dc98" stroke="#c0822a"/>
</svg>
<div class="t" style="left:39px;top:544px;letter-spacing:0.16px">t</div>
<svg style="left:18px;top:565px" width="15" height="16">
<path d="M2.5 0.5H9.5L13.5 4.5V13.5H2.5Z" fill="#eef2fd" stroke="#3f7ff2"/>
<path d="M9.5 0.5V4.5H13.5" fill="#ffffff" stroke="#3f7ff2"/>
<path d="M4 3.5H7.5M4 5.5H7.5M9 8.5H12.5M9 10.5H12.5" stroke="#9a9a9a"/>
<rect x="0.5" y="7.5" width="7" height="7" fill="#fff" stroke="#000"/>
<path d="M2.3 9.3L5.7 12.7M5.7 9.3L2.3 12.7" stroke="#000" stroke-width="1.25" fill="none"/>
</svg>
<div class="t" style="left:39px;top:564px;letter-spacing:0.16px">server-config.wsdd</div>
<div class="a" style="left:16px;top:582px;width:72px;height:20px;border:1px solid #d4d4d4;border-radius:3px;background:linear-gradient(#f8f8f8,#ebebeb)"></div>
<svg style="left:18px;top:585px" width="15" height="16">
<path d="M2.5 0.5H9.5L13.5 4.5V13.5H2.5Z" fill="#eef2fd" stroke="#3f7ff2"/>
<path d="M9.5 0.5V4.5H13.5" fill="#ffffff" stroke="#3f7ff2"/>
<path d="M4 3.5H7.5M4 5.5H7.5M9 8.5H12.5M9 10.5H12.5" stroke="#9a9a9a"/>
<rect x="0.5" y="7.5" width="7" height="7" fill="#fff" stroke="#000"/>
<path d="M2.3 9.3L5.7 12.7M5.7 9.3L2.3 12.7" stroke="#000" stroke-width="1.25" fill="none"/>
</svg>
<div class="t" style="left:39px;top:584px;letter-spacing:0.16px">web.xml</div>
<svg style="left:18px;top:605px" width="15" height="16">
<path d="M2.5 0.5H9.5L13.5 4.5V13.5H2.5Z" fill="#eef2fd" stroke="#3f7ff2"/>
<path d="M9.5 0.5V4.5H13.5" fill="#ffffff" stroke="#3f7ff2"/>
<path d="M4 3.5H7.5M4 5.5H7.5M9 8.5H12.5M9 10.5H12.5" stroke="#9a9a9a"/>
<rect x="0.5" y="7.5" width="7" height="7" fill="#fff" stroke="#000"/>
<path d="M2.3 9.3L5.7 12.7M5.7 9.3L2.3 12.7" stroke="#000" stroke-width="1.25" fill="none"/>
</svg>
<div class="t" style="left:39px;top:604px;letter-spacing:0.16px">weblogic.xml</div>
<svg style="left:2px;top:625px" width="12" height="15">
<path d="M0.5 0.5H7.5L10.5 3.5V13.5H0.5Z" fill="#fbfbf8" stroke="#9a8048"/>
<path d="M7.5 0.5V3.5H10.5Z" fill="#e0c890" stroke="#9a8048"/>
<path d="M2 4.5H6" stroke="#e04040"/>
<path d="M2 6.5H5M6 6.5H8.5" stroke="#6a88c0"/>
<path d="M2 8.5H3.5" stroke="#e04040"/><path d="M5 8.5H8.5" stroke="#3a5aa0"/>
<path d="M2 10.5H8.5" stroke="#40a050"/>
</svg>
<div class="t" style="left:20px;top:624px;letter-spacing:0.16px">404.html</div>
<svg style="left:2px;top:645px" width="12" height="15">
<path d="M0.5 0.5H7.5L10.5 3.5V13.5H0.5Z" fill="#fbfbfd" stroke="#8a94b0"/>
<path d="M7.5 0.5V3.5H10.5Z" fill="#e0c890" stroke="#9a8a68"/>
<path d="M2 3.5H5.5M2 5.5H9M2 7.5H9M2 9.5H9M2 11.5H7.5" stroke="#7088c0"/>
</svg>
<div class="t" style="left:20px;top:644px;letter-spacing:0.16px">index.jhtml</div>
<svg style="left:2px;top:665px" width="12" height="15">
<path d="M0.5 0.5H7.5L10.5 3.5V13.5H0.5Z" fill="#fbfbf8" stroke="#9a8048"/>
<path d="M7.5 0.5V3.5H10.5Z" fill="#e0c890" stroke="#9a8048"/>
<path d="M2 4.5H6" stroke="#e04040"/>
<path d="M2 6.5H5M6 6.5H8.5" stroke="#6a88c0"/>
<path d="M2 8.5H3.5" stroke="#e04040"/><path d="M5 8.5H8.5" stroke="#3a5aa0"/>
<path d="M2 10.5H8.5" stroke="#40a050"/>
</svg>
<div class="t" style="left:20px;top:664px;letter-spacing:0.16px">install_setup.html</div>
<svg style="left:2px;top:685px" width="12" height="15">
<path d="M0.5 0.5H7.5L10.5 3.5V13.5H0.5Z" fill="#fbfbf8" stroke="#9a8048"/>
<path d="M7.5 0.5V3.5H10.5Z" fill="#e0c890" stroke="#9a8048"/>
<path d="M2 4.5H6" stroke="#e04040"/>
<path d="M2 6.5H5M6 6.5H8.5" stroke="#6a88c0"/>
<path d="M2 8.5H3.5" stroke="#e04040"/><path d="M5 8.5H8.5" stroke="#3a5aa0"/>
<path d="M2 10.5H8.5" stroke="#40a050"/>
</svg>
<div class="t" style="left:20px;top:684px;letter-spacing:0.16px">install.html</div>
<div class="t" style="left:-2px;top:704px;letter-spacing:0.16px">sbbs</div>
<div class="t" style="left:-2px;top:724px;letter-spacing:0.16px">sv6bbs</div>
<div class="t" style="left:-2px;top:744px;letter-spacing:0.16px">sv7</div>
<div class="t" style="left:-2px;top:764px;letter-spacing:0.16px">d0310</div>
<div class="t" style="left:-2px;top:784px;letter-spacing:0.16px">d1202</div>
<!-- sash -->
<div class="a" style="left:396px;top:36px;width:3px;height:758px;background:#f0f0f0"></div>

<!-- EDITOR -->
<div class="a" style="left:399px;top:36px;width:539px;height:24px;background:#f0f0f0"></div>
<svg style="left:399px;top:36px" width="539" height="27">
<defs><linearGradient id="acttab" x1="0" y1="0" x2="0" y2="27" gradientUnits="userSpaceOnUse"><stop offset="0" stop-color="#e8eef6"/><stop offset="0.6" stop-color="#c6d5e8"/><stop offset="0.63" stop-color="#a4bad6"/><stop offset="1" stop-color="#9ab3d2"/></linearGradient></defs>
<path d="M0.5 24V5Q0.5 0.5 5 0.5H539" fill="none" stroke="#a0a0a0"/>
<path d="M139.5 23.5V5Q139.5 0.5 144 0.5" fill="none" stroke="#a0a0a0"/>
<path d="M293.5 23.5V5Q293.5 0.5 298 0.5" fill="none" stroke="#a0a0a0"/>
<path d="M0.5 23.5H432.5V6" fill="none" stroke="#a0a0a0"/>
<path d="M432 26V7Q432 1 438 1H517Q521 1 525 4L536 15.5Q540 20 548 23V27H432Z" fill="url(#acttab)"/>
<path d="M432.5 6Q433 1 438 0.5" fill="none" stroke="#a8b0bc"/>
<path d="M517 0.5Q521 0.5 525 3.5L536 15Q540 19.5 548 22.5" fill="none" stroke="#909aa8"/>
</svg>
<div class="a" style="left:399px;top:59px;width:1px;height:307px;background:#a0a0a0"></div>
<div class="a" style="left:399px;top:365px;width:539px;height:1px;background:#a0a0a0"></div>
<div class="a" style="left:400px;top:59px;width:538px;height:306px;border:2px solid #9fb7d5;border-right:none;border-top-width:3px"></div>
<div class="a" style="left:399px;top:59px;width:432px;height:1px;background:#a0a0a0"></div>
<div class="a" style="left:402px;top:62px;width:536px;height:301px;background:#f0f0f0"></div>
<div class="a" style="left:414px;top:62px;width:524px;height:284px;background:#fff"></div>
<div class="a" style="left:447px;top:62px;width:1px;height:284px;background:#f0f0f0"></div>
<svg style="left:406px;top:41px" width="12" height="15">
<path d="M0.5 0.5H7.5L10.5 3.5V13.5H0.5Z" fill="#f2f4fb" stroke="#a8862a"/>
<path d="M7.5 0.5V3.5H10.5Z" fill="#d8b060" stroke="#b89040" stroke-width="0.8"/>
<path d="M3 11.5V3.6H5.3Q7.7 3.6 7.7 5.8Q7.7 8 5.3 8H3" fill="none" stroke="#22b422" stroke-width="1.9"/>
</svg>
<div class="t" style="left:423px;top:41px;letter-spacing:0.3px">jdbc.properties</div>
<svg style="left:545px;top:41px" width="12" height="15">
<path d="M0.5 0.5H7.5L10.5 3.5V13.5H0.5Z" fill="#f2f4fb" stroke="#a8862a"/>
<path d="M7.5 0.5V3.5H10.5Z" fill="#d8b060" stroke="#b89040" stroke-width="0.8"/>
<path d="M3 11.5V3.6H5.3Q7.7 3.6 7.7 5.8Q7.7 8 5.3 8H3" fill="none" stroke="#22b422" stroke-width="1.9"/>
</svg>
<div class="t" style="left:562px;top:41px;letter-spacing:0.18px">jeecms.properties</div>
<svg style="left:699px;top:41px" width="12" height="15">
<path d="M0.5 0.5H7.5L10.5 3.5V13.5H0.5Z" fill="#f2f4fb" stroke="#a8862a"/>
<path d="M7.5 0.5V3.5H10.5Z" fill="#d8b060" stroke="#b89040" stroke-width="0.8"/>
<path d="M3 11.5V3.6H5.3Q7.7 3.6 7.7 5.8Q7.7 8 5.3 8H3" fill="none" stroke="#22b422" stroke-width="1.9"/>
</svg>
<div class="t" style="left:716px;top:41px;letter-spacing:0.3px">jdbc.properties</div>
<svg style="left:835px;top:41px" width="15" height="16">
<path d="M2.5 0.5H9.5L13.5 4.5V13.5H2.5Z" fill="#eef2fd" stroke="#3f7ff2"/>
<path d="M9.5 0.5V4.5H13.5" fill="#ffffff" stroke="#3f7ff2"/>
<path d="M4 3.5H7.5M4 5.5H7.5M9 8.5H12.5M9 10.5H12.5" stroke="#9a9a9a"/>
<rect x="0.5" y="7.5" width="7" height="7" fill="#fff" stroke="#000"/>
<path d="M2.3 9.3L5.7 12.7M5.7 9.3L2.3 12.7" stroke="#000" stroke-width="1.25" fill="none"/>
</svg>
<div class="t" style="left:855px;top:41px">web.xml</div>
<svg style="left:910px;top:43px" width="11" height="11">
<path d="M0.5 2.3L2.3 0.5L5 3.2L7.7 0.5L9.5 2.3L6.8 5L9.5 7.7L7.7 9.5L5 6.8L2.3 9.5L0.5 7.7L3.2 5Z" fill="#fff" stroke="#5a5a5a" stroke-width="1.1" stroke-linejoin="round"/>
</svg>
<div class="a" style="left:402px;top:62px;width:536px;height:284px;overflow:hidden">
<div class="code ln" style="left:11px;top:-7px">189</div>
<div class="code" style="left:46px;top:-7px">    <span class="tg">&lt;/listener&gt;</span></div>
<div class="code ln" style="left:11px;top:10px">190</div>
<div class="code" style="left:46px;top:10px">    <span class="cm">&lt;!-- axis1</span>    <span class="cm">--&gt;</span></div>
<div class="code ln" style="left:11px;top:27px">191</div>
<div class="code" style="left:46px;top:27px">     <span class="tg">&lt;servlet&gt;</span></div>
<div class="code ln" style="left:11px;top:44px">192</div>
<div class="code" style="left:46px;top:44px">        <span class="tg">&lt;servlet-name&gt;</span>AxisServlet<span class="tg">&lt;/servlet-name&gt;</span></div>
<div class="code ln" style="left:11px;top:61px">193</div>
<div class="code" style="left:46px;top:61px">        <span class="tg">&lt;servlet-class&gt;</span>org.apache.axis.transport.http.AxisServlet<span class="tg">&lt;/servlet-class&gt;</span></div>
<div class="code ln" style="left:11px;top:78px">194</div>
<div class="code" style="left:46px;top:78px">        <span class="tg">&lt;load-on-startup&gt;</span>1<span class="tg">&lt;/load-on-startup&gt;</span></div>
<div class="code ln" style="left:11px;top:95px">195</div>
<div class="code" style="left:46px;top:95px">    <span class="tg">&lt;/servlet&gt;</span></div>
<div class="code ln" style="left:11px;top:112px">196</div>
<div class="code" style="left:46px;top:112px">     <span class="tg">&lt;servlet-mapping&gt;</span></div>
<div class="code ln" style="left:11px;top:129px">197</div>
<div class="code" style="left:46px;top:129px">      <span class="tg">&lt;servlet-name&gt;</span>AxisServlet<span class="tg">&lt;/servlet-name&gt;</span></div>
<div class="code ln" style="left:11px;top:146px">198</div>
<div class="code" style="left:46px;top:146px">      <span class="tg">&lt;url-pattern&gt;</span>/services/*<span class="tg">&lt;/url-pattern&gt;</span></div>
<div class="code ln" style="left:11px;top:163px">199</div>
<div class="code" style="left:46px;top:163px">     <span class="tg">&lt;/servlet-mapping&gt;</span></div>
<div class="code ln" style="left:11px;top:180px">200</div>
<div class="code" style="left:46px;top:180px">     <span class="cm">&lt;!-- axis1</span>    <span class="cm">--&gt;</span></div>
<div class="code ln" style="left:11px;top:197px">201</div>
<div class="code" style="left:46px;top:197px">    <span class="tg">&lt;session-config&gt;</span></div>
<div class="code ln" style="left:11px;top:214px">202</div>
<div class="code" style="left:46px;top:214px">        <span class="tg">&lt;session-timeout&gt;</span>20<span class="tg">&lt;/session-timeout&gt;</span></div>
<div class="code ln" style="left:11px;top:231px">203</div>
<div class="code" style="left:46px;top:231px">    <span class="tg">&lt;/session-config&gt;</span></div>
<div class="code ln" style="left:11px;top:248px">204</div>
<div class="code" style="left:46px;top:248px">    <span class="tg">&lt;welcome-file-list&gt;</span></div>
<div class="code ln" style="left:11px;top:265px">205</div>
<div class="code" style="left:46px;top:265px">        <span class="tg">&lt;welcome-file&gt;</span>index.html<span class="tg">&lt;/welcome-file&gt;</span></div>
<svg style="left:36px;top:28.0px" width="10" height="10"><circle cx="4.5" cy="4.5" r="4" fill="#e8eef8" stroke="#a8b8d0"/><path d="M2 4.5H7" stroke="#7088a8"/></svg>
<svg style="left:36px;top:113.0px" width="10" height="10"><circle cx="4.5" cy="4.5" r="4" fill="#e8eef8" stroke="#a8b8d0"/><path d="M2 4.5H7" stroke="#7088a8"/></svg>
<svg style="left:36px;top:198.0px" width="10" height="10"><circle cx="4.5" cy="4.5" r="4" fill="#e8eef8" stroke="#a8b8d0"/><path d="M2 4.5H7" stroke="#7088a8"/></svg>
<svg style="left:36px;top:249.0px" width="10" height="10"><circle cx="4.5" cy="4.5" r="4" fill="#e8eef8" stroke="#a8b8d0"/><path d="M2 4.5H7" stroke="#7088a8"/></svg>
</div>
<svg style="left:561px;top:70px" width="30" height="15"><g fill="none" stroke="#1f8a1f" stroke-width="1.05" stroke-linecap="square"><path d="M1 0.5H12M0.5 6.5H12.5M3.5 0.5V7.5Q3.5 11 0.8 13.5M9.5 0.5V13.5"/><path transform="translate(15 0)" d="M3 0.5L0.8 8H5.5M0.5 4.5H5.5M4.8 4.5Q4.5 10.5 0.8 13.5M1.8 9L5 12.5M9 0.5L7 5.5H12.5M11 3L12.5 5.5M7.5 8.5H12.5V13.5H7.5Z"/></g></svg>
<svg style="left:569px;top:240px" width="30" height="15"><g fill="none" stroke="#1f8a1f" stroke-width="1.05" stroke-linecap="square"><path d="M3 0.5L0.8 4.5H3.8L0.8 8.8L4.8 8M0.8 12.8L4.8 11.3M6 3H12.5M9.3 0.5V6.5M7 6.5H11.8M7.5 8.5H11.8V13.5H7.5Z"/><path transform="translate(15 0)" d="M0.5 2.5H12.5M6.5 0.3V13.8M2.5 5.5H10.5V9.5H2.5ZM6 9.5L0.8 13.5M7 9.5L12.3 13.5"/></g></svg>
<svg style="left:453px;top:350px" width="6" height="8"><path d="M5 0L0.5 4L5 8Z" fill="#303030"/></svg>
<div class="a" style="left:466px;top:347px;width:219px;height:15px;border:1px solid #9a9a9a;border-radius:2px;background:linear-gradient(#f6f6f6,#e6e6e6 50%,#d4d4d4)"></div>
<svg style="left:571px;top:351px" width="7" height="8"><path d="M0.5 0V8M2.5 0V8M4.5 0V8" stroke="#404040"/><path d="M1.5 0V8M3.5 0V8M5.5 0V8" stroke="#fff"/></svg>
<!-- BOTTOM PANEL -->
<div class="a" style="left:399px;top:366px;width:539px;height:4px;background:#f0f0f0"></div>
<div class="a" style="left:399px;top:369px;width:539px;height:23px;background:#f0f0f0"></div>
<div class="a" style="left:400px;top:393px;width:538px;height:401px;background:#fff"></div>
<div class="a" style="left:399px;top:369px;width:1px;height:425px;background:#a0a0a0"></div>
<svg style="left:399px;top:369px" width="539" height="25">
<defs><linearGradient id="wtab" x1="0" y1="0" x2="0" y2="1"><stop offset="0" stop-color="#ffffff"/><stop offset="1" stop-color="#f3f3f3"/></linearGradient></defs>
<path d="M0.5 24V5Q0.5 0.5 5 0.5H539" fill="none" stroke="#a0a0a0"/>
<path d="M83.5 23.5V5Q83.5 0.5 88 0.5" fill="none" stroke="#a0a0a0"/>
<path d="M145.5 23.5V5Q145.5 0.5 150 0.5" fill="none" stroke="#a0a0a0"/>
<path d="M0 23.5H233" fill="none" stroke="#a0a0a0"/>
<path d="M232.5 24V5Q232.5 0.5 237 0.5H313Q318 0.5 322 3.5L338 19.5Q342 23.5 348 23.5V25H232Z" fill="url(#wtab)"/>
<path d="M232.5 23.5V5Q232.5 0.5 237 0.5H313Q318 0.5 322 3.5L338 19.5Q342 23.5 348 23.5H539" fill="none" stroke="#a0a0a0"/>
<path d="M489.5 23.5V5Q489.5 0.5 485 0.5" fill="none" stroke="#a0a0a0"/>
</svg>
<svg style="left:404px;top:373px" width="15" height="15">
<path d="M0.5 0.5H10.5Q12.5 0.5 12.5 2V4.5Q11.5 5 11.5 7V11Q11.5 13.5 13.5 14V14.5H0.5Z" fill="#f4f8fc" stroke="#6a7ea8"/>
<path d="M0.5 7H9.5M9.5 0.5V14.5" stroke="#7a8aa8"/>
<path d="M0.5 14.5V0.5H7" fill="none" stroke="#8a8a60"/>
<circle cx="5" cy="4" r="2.4" fill="#e84050"/>
<path d="M2.5 13L5 9.8L7.5 13Z" fill="#f0a020" stroke="#e09010" stroke-width="0.6"/>
</svg>
<div class="t" style="left:423px;top:374px">Problems</div>
<svg style="left:487px;top:373px" width="16" height="16">
<rect x="3.5" y="1.5" width="10" height="13" rx="1" fill="#f0f4fa" stroke="#c09858"/>
<path d="M6 0.5H11V3H6Z" fill="#8898b8"/>
<path d="M9 6.5H12M9 8.5H12M8 10.5H12" stroke="#4060a0"/>
<path d="M0.8 9.2L3.8 12.2L8.5 5" fill="none" stroke="#1070e0" stroke-width="1.8"/>
</svg>
<div class="t" style="left:507px;top:374px;letter-spacing:-0.3px">Tasks</div>
<svg style="left:549px;top:375px" width="14" height="12">
<rect x="0.5" y="0.5" width="12" height="10" fill="#fff" stroke="#5a6a8a"/>
<rect x="1" y="1" width="11" height="1.6" fill="#8090b0"/>
<path d="M1 4H12M1 6H12M1 8H12" stroke="#a8b4cc"/>
<path d="M4.5 2.5V10" stroke="#a8b4cc"/>
</svg>
<div class="t" style="left:567px;top:374px">Properties</div>
<svg style="left:637px;top:374px" width="14" height="13">
<path d="M2.5 0.5V12M6.5 0V12M10.5 0.5V12" stroke="#2a3a9a" stroke-width="1.1"/>
<rect x="0.3" y="5.6" width="4.4" height="3.4" rx="1.4" fill="#e0e050" stroke="#2a7a40" stroke-width="0.9"/>
<rect x="4.3" y="1.6" width="4.4" height="3.4" rx="1.4" fill="#f0e080" stroke="#a07810" stroke-width="0.9"/>
<rect x="8.3" y="6.6" width="4.4" height="3.4" rx="1.4" fill="#a0d8e0" stroke="#3060a8" stroke-width="0.9"/>
</svg>
<div class="t" style="left:655px;top:374px;letter-spacing:-0.3px">Servers</div>
<svg style="left:706px;top:376px" width="11" height="11">
<path d="M0.5 2.3L2.3 0.5L5 3.2L7.7 0.5L9.5 2.3L6.8 5L9.5 7.7L7.7 9.5L5 6.8L2.3 9.5L0.5 7.7L3.2 5Z" fill="#fff" stroke="#808080" stroke-width="1.1" stroke-linejoin="round"/>
</svg>
<svg style="left:741px;top:373px" width="17" height="16">
<path d="M0.5 0.5L4 3L7.5 0.5L11 3L14.5 0.5V12.5L11 15L7.5 12.5L4 15L0.5 12.5Z" fill="#b4f038" stroke="#707058" stroke-width="0.9" stroke-linejoin="round"/>
<path d="M4 3V15M7.5 0.5V12.5M11 3V15" stroke="#88b830" stroke-width="0.8"/>
<path d="M0.8 6Q2.5 8.5 4.5 7T8 7.5T11 6.5" stroke="#3a90c8" stroke-width="1.6" fill="none"/>
<rect x="10.5" y="5.5" width="5.5" height="10" fill="#f0eed8" stroke="#606048"/>
<path d="M11.5 8.5H15M11.5 11H15M11.5 13.5H15" stroke="#606048" stroke-width="0.8"/>
<circle cx="14" cy="7.2" r="0.7" fill="#e02020"/>
</svg>
<div class="t" style="left:762px;top:374px">Data Source Explorer</div>
<svg style="left:895px;top:374px" width="14" height="14">
<rect x="0.5" y="0.5" width="10" height="12" fill="#f4f6fa" stroke="#a8a080"/>
<path d="M1.8 1.8L6 6M1.8 1.8V4.5M1.8 1.8H4.5" stroke="#203060" stroke-width="1.1" fill="none"/>
<rect x="2.5" y="6" width="10" height="6.5" fill="#fff" stroke="#3a6aa8"/>
<path d="M6 8.2H11M6 10.2H11" stroke="#e04848"/>
<path d="M6 10.2H11" stroke="#40a050"/>
<path d="M4 8.2H5M4 10.2H5" stroke="#e04848"/>
</svg>
<div class="t" style="left:913px;top:374px">Snippets</div>
<div class="a" style="left:402px;top:395px;width:199px;height:22px;background:linear-gradient(#f3f9fd 0%,#f3f9fd 42%,#ddedf9 43%,#ddedf9 100%)"></div>
<div class="a" style="left:402px;top:395px;width:1px;height:22px;background:#a8daf8"></div>
<div class="a" style="left:402px;top:416px;width:199px;height:1px;background:#a0d4f4"></div>
<div class="a" style="left:601px;top:395px;width:337px;height:22px;background:linear-gradient(#ffffff 0%,#ffffff 42%,#f6f7f9 43%,#f1f2f4 100%)"></div>
<div class="a" style="left:602px;top:416px;width:336px;height:1px;background:#d6d9de"></div>
<div class="a" style="left:601px;top:395px;width:1px;height:22px;background:#dde4ea"></div>
<div class="a" style="left:801px;top:395px;width:1px;height:22px;background:#e2e4e8"></div>
<svg style="left:498px;top:396px" width="8" height="4"><path d="M0 4L4 0L8 4Z" fill="#a0c8e4"/><path d="M1 4L4 1L7 4Z" fill="#6a9cc8"/></svg>
<div class="t" style="left:408px;top:399px">Server</div>
<div class="t" style="left:608px;top:399px">State</div>
<div class="t" style="left:808px;top:399px">Status</div>
<div class="a" style="left:402px;top:417px;width:199px;height:377px;background:#f7f7f7"></div>
<div class="a" style="left:403px;top:418px;width:540px;height:21px;border:1px solid #d6d6d6;border-radius:3px;background:linear-gradient(#fafafa,#e9e9e9)"></div>
<svg style="left:428px;top:421px" width="9" height="16">
<rect x="0.5" y="0.5" width="7" height="14" rx="0.8" fill="#e8e8f0" stroke="#8a8a68"/>
<rect x="1" y="1" width="6" height="4" fill="#f4f4fa"/>
<rect x="4" y="2" width="3" height="2" fill="#c8c8e0"/>
<circle cx="2.5" cy="2.8" r="1" fill="#10a020"/>
<path d="M0.5 5.5H7.5M0.5 7.5H7.5" stroke="#8a8a68"/>
<rect x="1" y="6" width="6" height="1" fill="#e0e0f0"/>
<rect x="1.5" y="8.5" width="5" height="5.5" fill="#c8c8e4"/>
</svg>
<div class="t" style="left:445px;top:421px">jspgou</div>
<svg style="left:606px;top:419px" width="9" height="16">
<rect x="0.5" y="0.5" width="7" height="14" rx="0.8" fill="#e8e8f0" stroke="#8a8a68"/>
<rect x="1" y="1" width="6" height="4" fill="#f4f4fa"/>
<rect x="4" y="2" width="3" height="2" fill="#c8c8e0"/>
<circle cx="2.5" cy="2.8" r="1" fill="#10a020"/>
<path d="M0.5 5.5H7.5M0.5 7.5H7.5" stroke="#8a8a68"/>
<rect x="1" y="6" width="6" height="1" fill="#e0e0f0"/>
<rect x="1.5" y="8.5" width="5" height="5.5" fill="#c8c8e4"/>
</svg>
<svg style="left:612px;top:427px" width="8" height="8"><path d="M0.5 0.5L7 3.8L0.5 7.2Z" fill="#60c060" stroke="#108030"/></svg>
<div class="t" style="left:623px;top:421px">Started</div>
<div class="t" style="left:807px;top:421px">Synchronized</div>
<svg style="left:445px;top:442px" width="14" height="15">
<path d="M2 3.5Q0.5 5 0.5 7V11.5Q0.5 13.5 2.5 13.5H7Q9 13.5 9 11.5V7Q9 5 7.5 3.5Z" fill="#f2f6fb" stroke="#9aaabb"/>
<rect x="1.5" y="0.5" width="6.5" height="2.8" rx="0.6" fill="#faeaa0" stroke="#c8a030" stroke-width="0.9"/>
<circle cx="9.8" cy="10.6" r="3.3" fill="#3a80c0" stroke="#2a5a88" stroke-width="0.6"/>
<path d="M8.2 9.6Q9.5 8.3 10.6 9.4L11.2 11.6L9.6 12.8Z" fill="#88c040"/>
</svg>
<div class="t" style="left:464px;top:441px">bbs4</div>
<div class="t" style="left:807px;top:441px">Synchronized</div>
<svg style="left:445px;top:462px" width="14" height="15">
<path d="M2 3.5Q0.5 5 0.5 7V11.5Q0.5 13.5 2.5 13.5H7Q9 13.5 9 11.5V7Q9 5 7.5 3.5Z" fill="#f2f6fb" stroke="#9aaabb"/>
<rect x="1.5" y="0.5" width="6.5" height="2.8" rx="0.6" fill="#faeaa0" stroke="#c8a030" stroke-width="0.9"/>
<circle cx="9.8" cy="10.6" r="3.3" fill="#3a80c0" stroke="#2a5a88" stroke-width="0.6"/>
<path d="M8.2 9.6Q9.5 8.3 10.6 9.4L11.2 11.6L9.6 12.8Z" fill="#88c040"/>
</svg>
<div class="t" style="left:464px;top:461px">cmsv7</div>
<div class="t" style="left:807px;top:461px">Synchronized</div>
<!-- ARROWS -->
<svg style="left:0;top:0" width="938" height="794">
<path d="M427.5 411L567 300" stroke="#ff0000" stroke-width="2.2" fill="none"/>
<path d="M575.5 293L561.5 294.5L571.5 306Z" fill="#ff0000" stroke="#ff0000" stroke-width="0.8" stroke-linejoin="round"/>
<path d="M125.5 632L99 602" stroke="#ff0000" stroke-width="2.2" fill="none"/>
<path d="M91.3 594L105.3 597.8L93.2 607.6Z" fill="#ff0000" stroke="#ff0000" stroke-width="0.8" stroke-linejoin="round"/>
</svg>
</body></html>
